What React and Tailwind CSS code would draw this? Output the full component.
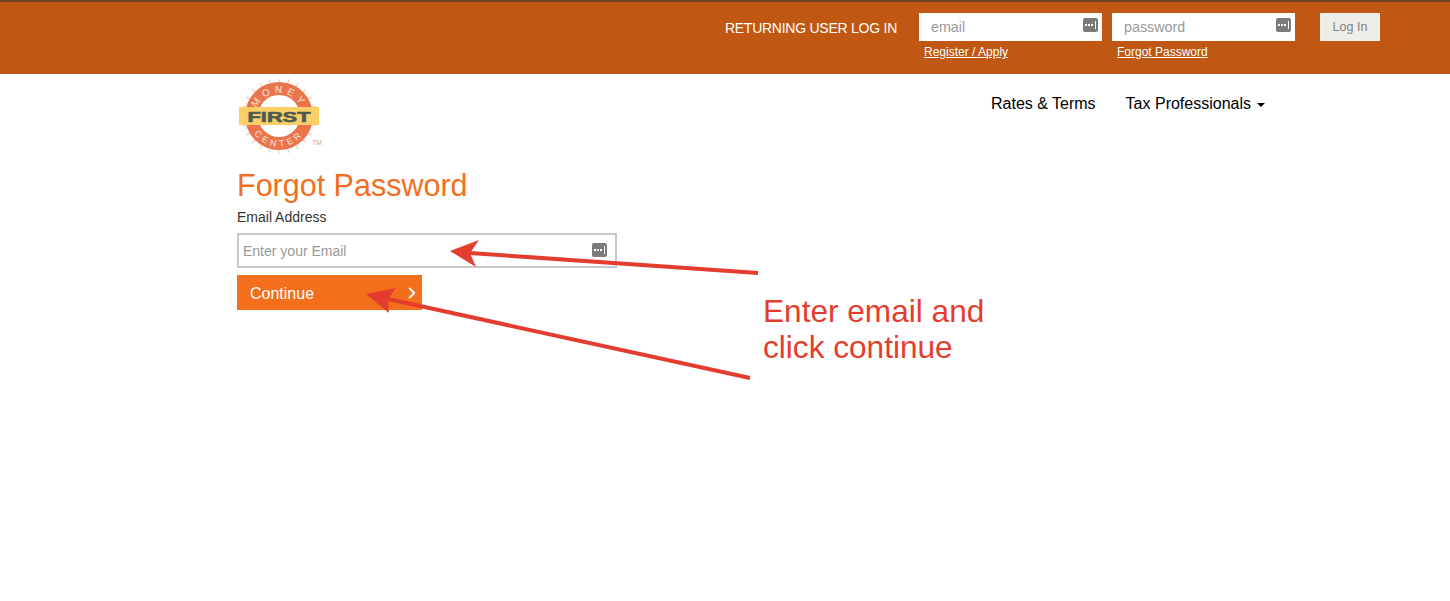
import React from "react";
import { ChevronRight } from "lucide-react";

const KeyIcon = () => (
  <svg width="15" height="14" viewBox="0 0 15 14" className="block">
    <rect width="15" height="14" rx="2" fill="#7b7b7b" />
    <rect x="2" y="6" width="2" height="2" fill="#fff" />
    <rect x="5" y="6" width="2" height="2" fill="#fff" />
    <rect x="8" y="6" width="2" height="2" fill="#fff" />
    <rect x="12" y="3" width="1" height="8" fill="#fff" />
  </svg>
);

const Logo = () => {
  const rays = Array.from({ length: 24 }, (_, i) => (i * 360) / 24);
  return (
    <svg width="90" height="76" viewBox="0 0 90 76" className="block">
      {rays.map((r) => (
        <line
          key={r}
          x1="42"
          y1="-1"
          x2="42"
          y2="5"
          stroke="#f4c0ab"
          strokeWidth="1"
          transform={`rotate(${r} 42 37)`}
        />
      ))}
      <circle cx="42" cy="37" r="34" fill="#ea754c" />
      <circle cx="42" cy="37" r="21" fill="#fff" />
      <defs>
        <path id="logoTop" d="M18 38 A24 24 0 0 1 66 38" />
        <path id="logoBottom" d="M11.5 37 A30.5 30.5 0 0 0 72.5 37" />
      </defs>
      <text fontFamily="Liberation Sans, sans-serif" fontSize="10" fill="#fbe6d6" letterSpacing="4">
        <textPath href="#logoTop" startOffset="50%" textAnchor="middle">MONEY</textPath>
      </text>
      <text fontFamily="Liberation Sans, sans-serif" fontSize="9" fill="#fbe6d6" letterSpacing="3.5">
        <textPath href="#logoBottom" startOffset="50%" textAnchor="middle">CENTER</textPath>
      </text>
      <rect x="2" y="28" width="80" height="18" fill="#fbcf68" />
      <text
        x="42"
        y="42.5"
        textAnchor="middle"
        fontFamily="Liberation Sans, sans-serif"
        fontSize="15"
        fontWeight="700"
        fill="#4f5a50"
        stroke="#4f5a50"
        strokeWidth="0.6"
        textLength="63"
        lengthAdjust="spacingAndGlyphs"
      >
        FIRST
      </text>
      <text x="75" y="66" fontFamily="Liberation Sans, sans-serif" fontSize="7" fill="#e8a58c">
        TM
      </text>
    </svg>
  );
};

const Arrow = ({ x1, y1, tip, wing1, wing2, notch }) => (
  <>
    <line x1={x1} y1={y1} x2={notch[0]} y2={notch[1]} stroke="#e43d30" strokeWidth="4" />
    <polygon
      points={`${tip[0]},${tip[1]} ${wing1[0]},${wing1[1]} ${notch[0]},${notch[1]} ${wing2[0]},${wing2[1]}`}
      fill="#e43d30"
    />
  </>
);

const HeaderField = ({ placeholder, link, linkClass }) => (
  <div className="w-[183px]">
    <div className="h-[28px] bg-white flex items-center justify-between pl-3 pr-[4px]">
      <span className="pt-[2px] text-[14.3px] text-[#999]">{placeholder}</span>
      <div className="-mt-[4px]">
        <KeyIcon />
      </div>
    </div>
    <a className={`mt-[4px] block w-fit text-[12px] leading-[14px] text-white underline ${linkClass}`}>
      {link}
    </a>
  </div>
);

export default function App() {
  return (
    <div className="relative h-[601px] overflow-hidden bg-white font-['Liberation_Sans',Arial,sans-serif]">
      <header className="h-[74px] bg-[#c05712] border-t-[2px] border-[#6e4426] flex justify-end pr-[70px] pt-[11px]">
        <span className="mr-[22px] mt-[7px] text-[14px] leading-[16px] tracking-[-0.25px] text-white">
          RETURNING USER LOG IN
        </span>
        <div className="flex gap-[10px]">
          <HeaderField placeholder="email" link="Register / Apply" linkClass="ml-[5px]" />
          <HeaderField placeholder="password" link="Forgot Password" linkClass="ml-[5px]" />
        </div>
        <button className="ml-[25px] h-[28px] w-[60px] bg-[#eeede8] border border-[#f5f4f0] text-[12.5px] text-[#808080]">
          Log In
        </button>
      </header>

      <div className="pl-[237px] pr-[185px]">
        <nav className="flex justify-between">
          <div className="pt-[5px]">
            <Logo />
          </div>
          <ul className="flex items-start gap-[30px] pt-[21px] text-[16px] leading-[18px] text-black">
            <li>Rates &amp; Terms</li>
            <li className="flex items-center">
              Tax Professionals
              <span className="ml-[6px] mr-[0px] mt-[2px] border-x-[4px] border-t-[4px] border-x-transparent border-t-black" />
            </li>
          </ul>
        </nav>

        <h1 className="mt-[13px] text-[30.5px] leading-[34px] text-[#f26f21]">Forgot Password</h1>
        <label className="mt-[7px] block text-[14px] leading-[17px] text-[#333]">Email Address</label>
        <div className="mt-[7px] h-[35px] w-[380px] border-2 border-[#c9c9c9] flex items-center justify-between pl-[4px] pr-[8px]">
          <span className="pt-[2px] text-[14px] text-[#999]">Enter your Email</span>
          <div className="-mt-[1px]">
            <KeyIcon />
          </div>
        </div>
        <button className="mt-[7px] h-[35px] w-[185px] bg-[#f36f1b] flex items-center justify-between pl-[13px] pr-[1px] text-[16px] text-white">
          <span className="pt-[2px]">Continue</span>
          <ChevronRight size={18} strokeWidth={2.5} />
        </button>
      </div>

      {/* annotation layer drawn over the page */}
      <svg width="1450" height="601" className="absolute inset-0 pointer-events-none">
        <Arrow x1={758} y1={273} tip={[450, 251]} wing1={[479, 240]} wing2={[476, 267]} notch={[470, 253]} />
        <Arrow x1={750} y1={378} tip={[366, 294]} wing1={[396, 288]} wing2={[389, 313]} notch={[388, 299]} />
      </svg>
      <div className="absolute left-[763px] top-[293px] text-[31.6px] leading-[36px] text-[#e43d30]">
        Enter email and
        <br />
        click continue
      </div>
    </div>
  );
}
